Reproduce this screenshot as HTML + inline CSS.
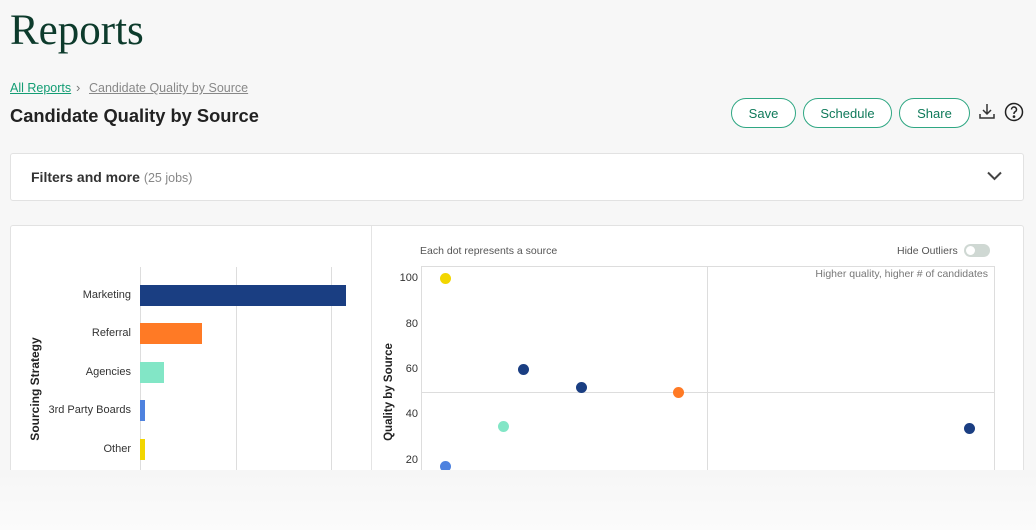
<!DOCTYPE html>
<html><head><style>
*{margin:0;padding:0;box-sizing:border-box}
body{width:1036px;height:517px;background:#f7f7f7;font-family:"Liberation Sans",sans-serif;position:relative;overflow:hidden;color:#222}
.a{position:absolute}
.btn{position:absolute;top:98px;height:30px;border:1.5px solid #2fa783;border-radius:16px;color:#0f7a5a;font-size:13px;display:flex;align-items:center;justify-content:center;background:#fff}
.lbl{position:absolute;font-size:11px;color:#333;text-align:right;width:120px}
.yl{position:absolute;font-size:11px;color:#333;text-align:right;width:30px;left:388px}
.dot{position:absolute;width:11px;height:11px;border-radius:50%}
</style></head><body>
<div class="a" style="left:10px;top:6px;font-family:'Liberation Serif',serif;font-size:43px;color:#0d3b2c">Reports</div>
<div class="a" style="left:10px;top:81px;font-size:12.5px;color:#139d74;text-decoration:underline">All Reports</div>
<div class="a" style="left:76px;top:80px;font-size:13px;color:#777">›</div>
<div class="a" style="left:89px;top:81px;font-size:12.5px;color:#888;text-decoration:underline">Candidate Quality by Source</div>
<div class="a" style="left:10px;top:105px;font-size:18.3px;font-weight:bold;color:#222">Candidate Quality by Source</div>
<div class="btn" style="left:731px;width:65px">Save</div>
<div class="btn" style="left:803px;width:89px">Schedule</div>
<div class="btn" style="left:899px;width:71px">Share</div>
<svg class="a" style="left:978px;top:102px" width="18" height="18" viewBox="0 0 18 18" fill="none" stroke="#333" stroke-width="1.5"><path d="M9 2v10M5 8l4 4 4-4M2 12v4h14v-4"/></svg>
<svg class="a" style="left:1004px;top:102px" width="20" height="20" viewBox="0 0 20 20" fill="none" stroke="#222" stroke-width="1.5"><circle cx="10" cy="10" r="8.5"/><path d="M7.5 7.5a2.5 2.5 0 1 1 3.5 2.3c-.7.4-1 .9-1 1.7v.5"/><circle cx="10" cy="14.6" r=".6" fill="#222"/></svg>
<div class="a" style="left:10px;top:153px;width:1014px;height:48px;background:#fff;border:1px solid #e2e2e2;border-radius:3px"></div>
<div class="a" style="left:31px;top:169px;font-size:14px;font-weight:bold;color:#333">Filters and more <span style="font-weight:normal;color:#888;font-size:12.5px">(25 jobs)</span></div>
<svg class="a" style="left:987px;top:171px" width="15" height="10" viewBox="0 0 15 10" fill="none" stroke="#444" stroke-width="2"><path d="M1 1.5l6.5 6.5 6.5-6.5"/></svg>
<div class="a" style="left:10px;top:225px;width:1014px;height:300px;background:#fff;border:1px solid #e2e2e2;border-radius:3px"></div>
<div class="a" style="left:371px;top:226px;width:1px;height:250px;background:#e4e4e4"></div>
<div class="a" style="left:140px;top:267px;width:1px;height:210px;background:#ddd"></div>
<div class="a" style="left:236px;top:267px;width:1px;height:210px;background:#ddd"></div>
<div class="a" style="left:331px;top:267px;width:1px;height:210px;background:#ddd"></div>
<div class="a" style="left:140px;top:285px;width:206px;height:21px;background:#1a3e82"></div>
<div class="a" style="left:140px;top:323px;width:62px;height:21px;background:#ff7a25"></div>
<div class="a" style="left:140px;top:362px;width:24px;height:21px;background:#82e6c6"></div>
<div class="a" style="left:140px;top:400px;width:5px;height:21px;background:#4e82df"></div>
<div class="a" style="left:140px;top:439px;width:5px;height:21px;background:#f2d600"></div>
<div class="lbl" style="left:11px;top:289px">Marketing</div>
<div class="lbl" style="left:11px;top:327px">Referral</div>
<div class="lbl" style="left:11px;top:366px">Agencies</div>
<div class="lbl" style="left:11px;top:404px">3rd Party Boards</div>
<div class="lbl" style="left:11px;top:443px">Other</div>
<div class="a" style="left:-30px;top:382px;width:130px;text-align:center;transform:rotate(-90deg);font-size:12px;font-weight:bold;color:#222;white-space:nowrap">Sourcing Strategy</div>
<div class="a" style="left:420px;top:245px;font-size:10.5px;color:#555">Each dot represents a source</div>
<div class="a" style="left:897px;top:245px;font-size:10.5px;color:#555">Hide Outliers</div>
<div class="a" style="left:964px;top:244px;width:26px;height:13px;border-radius:7px;background:#cfd8d3"></div>
<div class="a" style="left:966px;top:246px;width:9px;height:9px;border-radius:50%;background:#fff"></div>
<div class="a" style="left:421px;top:266px;width:574px;height:220px;border:1px solid #ddd"></div>
<div class="a" style="left:707px;top:266px;width:1px;height:210px;background:#ddd"></div>
<div class="a" style="left:421px;top:392px;width:574px;height:1px;background:#ddd"></div>
<div class="a" style="left:760px;top:268px;width:228px;text-align:right;font-size:10.5px;color:#777">Higher quality, higher # of candidates</div>
<div class="yl" style="top:272px">100</div>
<div class="yl" style="top:318px">80</div>
<div class="yl" style="top:363px">60</div>
<div class="yl" style="top:408px">40</div>
<div class="yl" style="top:454px">20</div>
<div class="a" style="left:329px;top:386px;width:120px;text-align:center;transform:rotate(-90deg);font-size:11.5px;font-weight:bold;color:#222;white-space:nowrap">Quality by Source</div>
<div class="dot" style="left:440px;top:273px;background:#f2d600"></div>
<div class="dot" style="left:518px;top:364px;background:#1a3e82"></div>
<div class="dot" style="left:576px;top:382px;background:#1a3e82"></div>
<div class="dot" style="left:673px;top:387px;background:#ff7a25"></div>
<div class="dot" style="left:498px;top:421px;background:#82e6c6"></div>
<div class="dot" style="left:440px;top:461px;background:#4e82df"></div>
<div class="dot" style="left:964px;top:423px;background:#1a3e82"></div>
<div class="a" style="left:0;top:470px;width:1036px;height:60px;background:linear-gradient(#f6f6f6,#fbfbfb)"></div>
</body></html>
